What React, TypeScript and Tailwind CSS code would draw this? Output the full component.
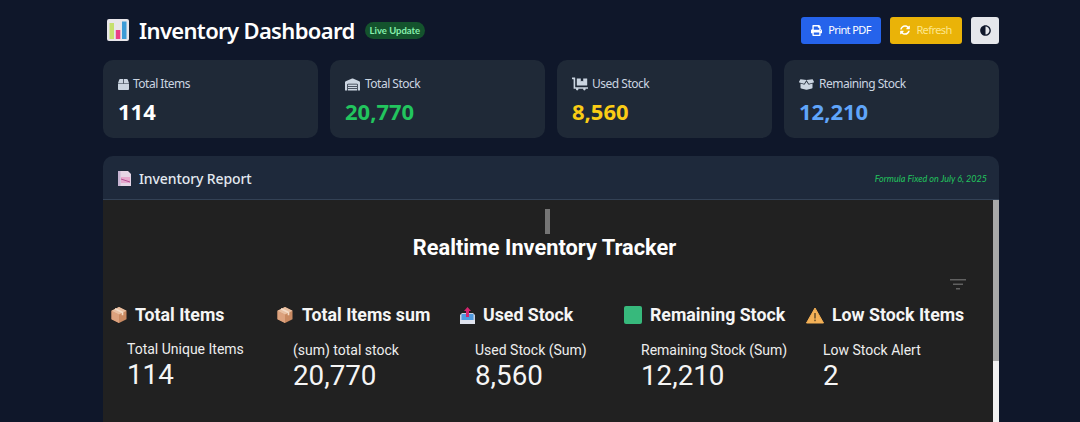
import React from 'react';
import { FaBox, FaWarehouse, FaDollyFlatbed, FaBoxOpen, FaPrint, FaSyncAlt, FaAdjust } from 'react-icons/fa';

const BarChartEmoji = () => (
  <svg width="24" height="24" viewBox="0 0 24 24">
    <rect x="1" y="1" width="22" height="22" rx="2" fill="#e8e6ea" />
    <rect x="3.5" y="5" width="4.5" height="16" fill="#c6e06e" />
    <rect x="9.8" y="12" width="4.5" height="9" fill="#ea3f86" />
    <rect x="16" y="3.5" width="4.5" height="17.5" fill="#3d9bd6" />
  </svg>
);

const ReportEmoji = () => (
  <svg width="16" height="17" viewBox="0 0 16 17">
    <path d="M2 1h9l3 3v12H2z" fill="#e6d5e6" />
    <path d="M4 7h9v6H4z" fill="#e59ac6" opacity="0.75" />
    <path d="M4 9l9 3" stroke="#b34d90" strokeWidth="1" />
    <rect x="1" y="1" width="2.5" height="15" fill="#c8b4d2" />
  </svg>
);

const PackageEmoji = () => (
  <svg width="18" height="18" viewBox="0 0 18 18">
    <path d="M9 1l7.5 3.7v8.6L9 17l-7.5-3.7V4.7z" fill="#c98a62" />
    <path d="M9 8.5L1.5 4.7v8.6L9 17z" fill="#dca27e" />
    <path d="M9 8.5l7.5-3.8L9 1 1.5 4.7z" fill="#e9c0a2" />
    <path d="M5 2.8l7.5 3.8v2.6" stroke="#f3dcc8" strokeWidth="1.6" fill="none" />
  </svg>
);

const OutboxEmoji = () => (
  <svg width="17" height="19" viewBox="0 0 17 19">
    <path d="M1 9l2-2h11l2 2v9H1z" fill="#c9cfe0" />
    <path d="M2.5 8h12v7h-12z" fill="#4f9ae0" />
    <path d="M1 14h15v4H1z" fill="#dfe3ee" />
    <path d="M8.5 1l3.5 4h-2v6H7V5H5z" fill="#d6246e" />
  </svg>
);

const GreenSquare = () => (
  <svg width="18" height="18" viewBox="0 0 18 18">
    <rect width="18" height="18" rx="2" fill="#37b97c" />
  </svg>
);

const WarningEmoji = () => (
  <svg width="18" height="17" viewBox="0 0 18 17">
    <path d="M9 1L17.5 16H.5z" fill="#f4b157" stroke="#f4b157" strokeLinejoin="round" />
    <rect x="8.3" y="6" width="1.4" height="5.5" fill="#5c4526" />
    <rect x="8.3" y="12.6" width="1.4" height="1.6" fill="#5c4526" />
  </svg>
);

const stats = [
  { label: 'Total Items', value: '114', icon: <FaBox size={11} />, gap: 'gap-[4px]', color: 'text-white' },
  { label: 'Total Stock', value: '20,770', icon: <FaWarehouse size={15} />, gap: 'gap-[5px]', color: 'text-[#22c55e]' },
  { label: 'Used Stock', value: '8,560', icon: <FaDollyFlatbed size={16} />, gap: 'gap-[4px]', color: 'text-[#facc15]' },
  { label: 'Remaining Stock', value: '12,210', icon: <FaBoxOpen size={15} />, gap: 'gap-[5px]', color: 'text-[#60a5fa]' },
];

const tiles = [
  { title: 'Total Items', icon: <PackageEmoji />, label: 'Total Unique Items', value: '114', w: 'w-[166px]', gap: 'gap-[7px]', top: 'mt-[13px]' },
  { title: 'Total Items sum', icon: <PackageEmoji />, label: '(sum) total stock', value: '20,770', w: 'w-[182px]', gap: 'gap-[8px]', top: 'mt-[14px]' },
  { title: 'Used Stock', icon: <OutboxEmoji />, label: 'Used Stock (Sum)', value: '8,560', w: 'w-[166px]', gap: 'gap-[7px]', top: 'mt-[14px]' },
  { title: 'Remaining Stock', icon: <GreenSquare />, label: 'Remaining Stock (Sum)', value: '12,210', w: 'w-[182px]', gap: 'gap-[8px]', top: 'mt-[14px]' },
  { title: 'Low Stock Items', icon: <WarningEmoji />, label: 'Low Stock Alert', value: '2', w: 'w-[170px]', gap: 'gap-[8px]', top: 'mt-[14px]' },
];

const App: React.FC = () => {
  return (
    <div className="h-[422px] overflow-hidden bg-[#0f172a] font-['Noto_Sans',sans-serif] text-white">
      <div className="ml-[103px] w-[896px] pt-[16px]">
        <header className="flex h-[28px] items-center justify-between">
          <div className="flex items-center">
            <span className="ml-[3px]"><BarChartEmoji /></span>
            <h1 className="ml-[9px] text-[22px] leading-[28px] font-semibold tracking-[-0.65px]">Inventory Dashboard</h1>
            <span className="ml-[10px] rounded-full bg-[#14532d] px-[5px] py-[2px] font-['Lato',sans-serif] text-[9.5px] leading-[13px] font-bold text-[#86efac]">
              Live Update
            </span>
          </div>
          <div className="flex items-center">
            <button className="flex h-[27px] w-[80px] items-center justify-center gap-[6px] rounded-[3px] bg-[#2563eb] text-[11px] tracking-[-0.6px] text-white">
              <FaPrint size={11} /> Print PDF
            </button>
            <button className="ml-[9px] flex h-[27px] w-[72px] items-center justify-center gap-[6px] rounded-[3px] bg-[#eab308] text-[11px] tracking-[-0.6px] text-[#fde68a]">
              <FaSyncAlt size={10} className="text-white" /> Refresh
            </button>
            <button className="ml-[9px] flex h-[27px] w-[28px] items-center justify-center rounded-[3px] bg-[#e5e7eb] text-[#0f172a]">
              <FaAdjust size={11} />
            </button>
          </div>
        </header>

        <section className="mt-[16px] grid grid-cols-4 gap-[12px]">
          {stats.map(s => (
            <div key={s.label} className="h-[78px] rounded-[10px] bg-[#1f2937] px-[15px] pt-[14px]">
              <div className={`flex h-[20px] items-center ${s.gap} text-[12px] tracking-[-0.5px] text-[#cbd5e1]`}>
                {s.icon}
                <span>{s.label}</span>
              </div>
              <div className={`mt-[1px] text-[22px] leading-[33px] font-bold ${s.color}`}>{s.value}</div>
            </div>
          ))}
        </section>

        <section className="mt-[18px] overflow-hidden rounded-t-[10px]">
          <div className="flex h-[44px] items-center justify-between border-b border-[#334155] bg-[#1e293b] pt-[2px] pr-[12px] pl-[14px]">
            <div className="flex items-center gap-[6px] text-[14px] font-medium tracking-[-0.1px] text-[#e2e8f0]">
              <ReportEmoji />
              Inventory Report
            </div>
            <span className="font-['Lato',sans-serif] text-[9px] text-[#22c55e] italic">Formula Fixed on July 6, 2025</span>
          </div>

          <div className="flex h-[222px] bg-[#212121] font-['Roboto',sans-serif]">
            <div className="min-w-0 flex-1">
              <div className="mt-[9px] ml-[442px] h-[25px] w-[5px] bg-[#757575]" />
              <h2 className="mt-[1px] pr-[7px] text-center text-[21.75px] leading-[26px] font-bold text-white">Realtime Inventory Tracker</h2>
              <div className="mt-[17px] flex h-[13px] justify-end pr-[27px]">
                <svg width="16" height="13" viewBox="0 0 16 13" fill="#616161">
                  <rect x="0" y="1" width="16" height="1.5" />
                  <rect x="3" y="5.5" width="10" height="1.5" />
                  <rect x="6" y="10" width="4" height="1.5" />
                </svg>
              </div>
              <div className="mt-[12px] flex pl-[7px]">
                {tiles.map(t => (
                  <div key={t.title} className={`${t.w} shrink-0`}>
                    <div className={`flex h-[24px] items-center ${t.gap} text-[17.75px] font-bold whitespace-nowrap text-[#f5f5f5]`}>
                      <span className="flex w-[18px] justify-center">{t.icon}</span>
                      {t.title}
                    </div>
                    <div className={`ml-[17px] ${t.top} text-[14px] leading-[18px] whitespace-nowrap text-[#eeeeee]`}>{t.label}</div>
                    <div className="mt-[2px] ml-[17px] text-[27.75px] leading-[30px] text-[#f5f5f5]">{t.value}</div>
                  </div>
                ))}
              </div>
            </div>
            <div className="flex w-[6px] shrink-0 flex-col bg-[#f1f1f1]">
              <div className="h-[161px] bg-[#a8a8a8]" />
            </div>
          </div>
        </section>
      </div>
    </div>
  );
};

export default App;
